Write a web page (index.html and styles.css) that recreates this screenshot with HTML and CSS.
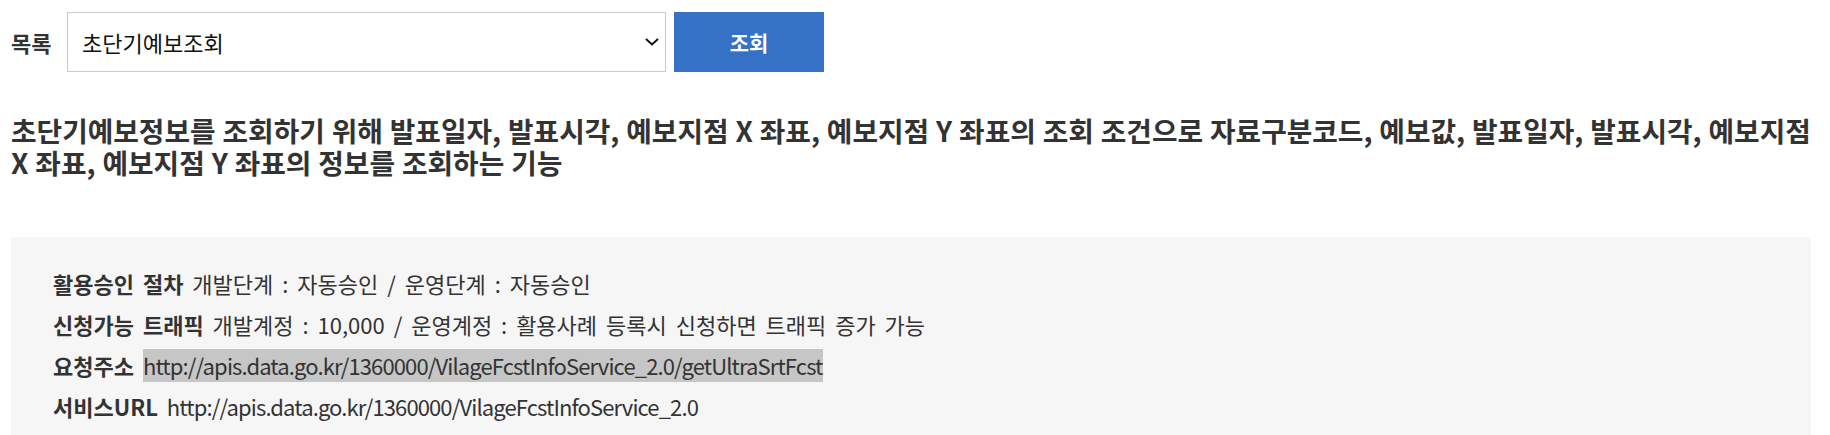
FILE: index.html
```html
<!DOCTYPE html>
<html>
	<head>
		<meta charset="UTF-8">
		<title>초단기예보조회</title>
		<link rel="stylesheet" href="styles.css">
	</head>
	<body>
		<div id="wrap">
			<div class="search">
				<label class="search-label" for="api">목록</label>
				<div class="select-box">
					<select id="api">
						<option>초단기예보조회</option>
						<option>초단기실황조회</option>
						<option>단기예보조회</option>
						<option>예보버전조회</option>
					</select>
					<svg class="select-arrow" width="14" height="8" viewBox="0 0 14 8"><path d="M1 1l6 5.5L13 1" fill="none" stroke="#111" stroke-width="2"/></svg>
				</div>
				<button class="btn-search" type="button">조회</button>
			</div>

			<h3 class="desc">초단기예보정보를 조회하기 위해 발표일자, 발표시각, 예보지점 X 좌표, 예보지점 Y 좌표의 조회 조건으로 자료구분코드, 예보값, 발표일자, 발표시각, 예보지점 X 좌표, 예보지점 Y 좌표의 정보를 조회하는 기능</h3>

			<div class="info">
				<ul>
					<li><strong>활용승인 절차</strong> 개발단계 : 자동승인 / 운영단계 : 자동승인</li>
					<li><strong>신청가능 트래픽</strong> 개발계정 : 10,000 / 운영계정 : 활용사례 등록시 신청하면 트래픽 증가 가능</li>
					<li><strong>요청주소</strong> <span class="url mark">http://apis.data.go.kr/1360000/VilageFcstInfoService_2.0/getUltraSrtFcst</span></li>
					<li><strong>서비스URL</strong> <span class="url">http://apis.data.go.kr/1360000/VilageFcstInfoService_2.0</span></li>
				</ul>
			</div>
		</div>
	</body>
</html>
```

FILE: styles.css
```css
*{margin: 0;padding: 0;box-sizing: border-box;}
li{list-style: none;}
body{font-family: "Noto Sans CJK KR",sans-serif;color: #333;background: #fff;}
#wrap{width: 1800px;margin-left: 11px;padding-top: 12px;}

.search{display: flex;align-items: center;height: 60px;}
.search-label{width: 56px;font-size: 22px;font-weight: bold;}
.select-box{position: relative;width: 599px;height: 60px;}
.select-box select{width: 100%;height: 100%;padding: 0 40px 0 14px;border: 1px solid #ccc;background: #fff;font-family: inherit;font-size: 22px;color: #111;appearance: none;-webkit-appearance: none;outline: none;}
.select-arrow{position: absolute;right: 7px;top: 26px;pointer-events: none;}
.btn-search{width: 150px;height: 60px;margin-left: 8px;border: 0;background: #3572c6;color: #fff;font-family: inherit;font-size: 21px;font-weight: bold;}

.desc{margin-top: 42px;font-size: 27.8px;line-height: 32px;font-weight: bold;word-break: keep-all;word-spacing: 0.6px;color: #333;}

.info{margin-top: 59px;padding: 30px 42px 20px;background: #f6f6f6;font-size: 22px;}
.info li{line-height: 33px;margin-bottom: 8px;word-spacing: 4px;}
.info strong{font-weight: bold;}
.info .url{letter-spacing: -0.88px;}
.info .mark{display: inline-block;background: #c6c6c6;word-spacing: 0;}
```
